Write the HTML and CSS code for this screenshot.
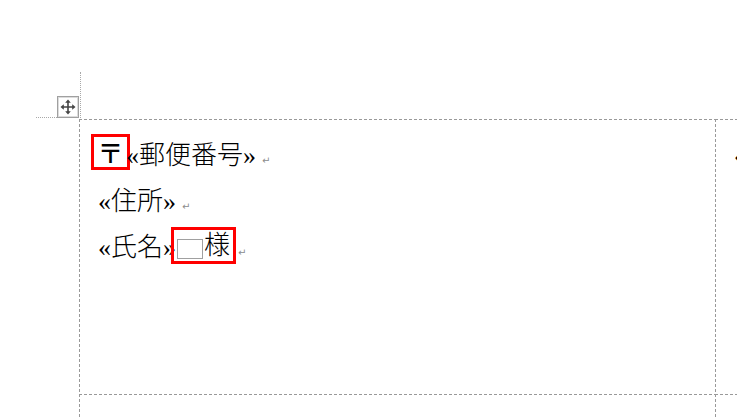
FILE: index.html
```html
<!DOCTYPE html>
<html lang="ja">
<head>
  <meta charset="UTF-8">
  <meta name="viewport" content="width=device-width, initial-scale=1.0">
  <title>差し込み印刷ラベル</title>
  <link rel="stylesheet" href="styles.css">
</head>
<body>
  <div class="page">
    <!--TEXT BOUNDARY CORNER-->
    <div class="corner"></div>

    <!--LABEL TABLE-->
    <div class="table">
      <span class="handle">
        <svg width="16" height="16" viewBox="0 0 16 16">
          <path d="M8 3V13M3 8H13" stroke="#454545" stroke-width="1.6"/>
          <polygon points="8,0.5 5.2,3.8 10.8,3.8" fill="#454545"/>
          <polygon points="8,15.5 5.2,12.2 10.8,12.2" fill="#454545"/>
          <polygon points="0.5,8 3.8,5.2 3.8,10.8" fill="#454545"/>
          <polygon points="15.5,8 12.2,5.2 12.2,10.8" fill="#454545"/>
        </svg>
      </span>

      <div class="cell label">
        <p class="line"><span class="zip">〒</span>«郵便番号»<span class="ret">↵</span></p>
        <p class="line">«住所»<span class="ret">↵</span></p>
        <p class="line">«氏名»<span class="honor"><span class="space"></span>様</span><span class="ret tight">↵</span></p>
      </div>
      <div class="cell label">
        <p class="line">«郵便番号»</p>
      </div>
      <div class="cell"></div>
      <div class="cell"></div>
    </div>
  </div>
</body>
</html>
```

FILE: styles.css
```css
html, body {
  margin: 0;
  height: 100%;
  overflow: hidden;
  background: #ffffff;
}
.page {
  padding-top: 72px;
}
.corner {
  margin-left: 36px;
  width: 44px;
  height: 45px;
  border-right: 1px dotted #a8a8a8;
  border-bottom: 1px dotted #a8a8a8;
}
.table {
  position: relative;
  margin-top: 1px;
  margin-left: 79px;
  height: 298px;
  display: grid;
  grid-template-columns: 636px 1fr;
  grid-template-rows: 275px 1fr;
}
.handle {
  position: absolute;
  left: -22px;
  top: -23px;
  width: 22px;
  height: 22px;
  box-sizing: border-box;
  border: 1px solid #a0a0a0;
  box-shadow: inset 0 0 0 1px #dcdcdc;
  background: #ffffff;
  display: flex;
  align-items: center;
  justify-content: center;
}
.cell {
  overflow: hidden;
  white-space: nowrap;
  background:
    repeating-linear-gradient(90deg, #999999 0 3px, transparent 3px 5px) top left / 100% 1px no-repeat,
    repeating-linear-gradient(180deg, #999999 0 3px, transparent 3px 5px) top left / 1px 100% no-repeat;
}
.label {
  padding: 14px 0 0 19px;
  font-family: "Liberation Serif", "Noto Sans CJK JP", serif;
  font-size: 26px;
  font-weight: 300;
  color: #000000;
}
.line {
  margin: 0;
  height: 46px;
  line-height: 46px;
}
.zip {
  display: inline-block;
  vertical-align: top;
  margin: 1px -4px 0 -7px;
  width: 33px;
  height: 30px;
  line-height: 30px;
  border: 3px solid #ff0000;
  text-align: center;
  font-family: "Noto Sans CJK JP", sans-serif;
  font-weight: 500;
}
.honor {
  display: inline-block;
  vertical-align: top;
  margin: 2px 0 0 -5px;
  padding: 0 3px;
  height: 31px;
  line-height: 31px;
  border: 3px solid #ff0000;
}
.space {
  display: inline-block;
  vertical-align: top;
  margin: 9px 1px 0 0;
  width: 24px;
  height: 18px;
  border: 1px solid #a0a0a0;
}
.ret {
  margin-left: 6px;
  font-family: "DejaVu Sans", sans-serif;
  font-size: 10px;
  font-weight: normal;
  color: #8c8c8c;
}
.ret.tight {
  margin-left: 2px;
}
```
